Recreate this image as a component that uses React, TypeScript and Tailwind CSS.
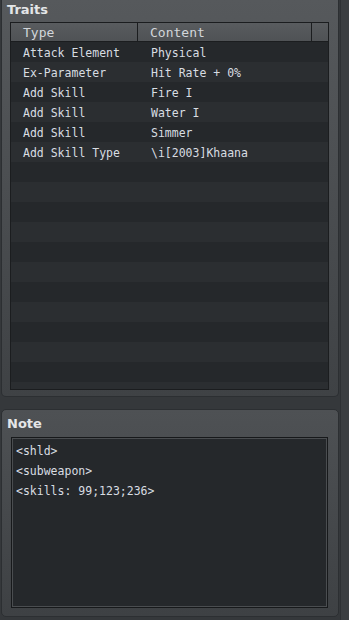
const traits = [
  { type: "Attack Element", content: "Physical" },
  { type: "Ex-Parameter", content: "Hit Rate + 0%" },
  { type: "Add Skill", content: "Fire I" },
  { type: "Add Skill", content: "Water I" },
  { type: "Add Skill", content: "Simmer" },
  { type: "Add Skill Type", content: "\\i[2003]Khaana" },
];

const noteLines = ["<shld>", "<subweapon>", "<skills: 99;123;236>"];

const mono = { fontFamily: '"DejaVu Sans Mono", "Liberation Mono", monospace' };
const sans = { fontFamily: '"DejaVu Sans", "Liberation Sans", sans-serif' };

// pad the list with empty rows so the table fills its box
const rows = [...traits, ...Array.from({ length: 12 }, () => ({ type: "", content: "" }))];

export default function App() {
  return (
    <div className="flex h-[620px] w-[349px] overflow-hidden bg-[#35383b]">
      <div className="flex w-[340px] flex-col">
        {/* Traits */}
        <div className="ml-[1px] flex h-[397px] w-[338px] flex-col rounded-b-[5px] border-x border-b border-[#2c2f32] bg-gradient-to-b from-[#56595c] to-[#3f4245]">
          <div
            className="h-[22px] pl-[5px] text-[13px] font-bold leading-[20px] text-[#e4e6e8]"
            style={sans}
          >
            Traits
          </div>
          <div className="ml-[8px] flex h-[368px] w-[319px] flex-col overflow-hidden border border-[#1b1d1f] bg-[#25282b]">
            <div
              className="flex h-[19px] shrink-0 border-b border-[#1b1d1f] bg-gradient-to-b from-[#595c5f] to-[#4f5255] text-[13px] leading-[20px] text-[#d2d6da]"
              style={mono}
            >
              <div className="w-[127px] border-r border-[#1b1d1f] pl-[12px]">Type</div>
              <div className="w-[174px] border-r border-[#1b1d1f] pl-[12px]">Content</div>
              <div className="flex-1" />
            </div>
            {rows.map((r, i) => (
              <div
                key={i}
                className={
                  "flex h-[20px] shrink-0 overflow-hidden text-[11.5px] leading-[22px] text-[#d8dde2] " +
                  (i % 2 === 0 ? "bg-[#25282b]" : "bg-[#2b2e31]")
                }
                style={mono}
              >
                <div className="w-[128px] whitespace-pre pl-[12px]">{r.type}</div>
                <div className="whitespace-pre pl-[12px]">{r.content}</div>
              </div>
            ))}
          </div>
        </div>

        {/* Note */}
        <div className="ml-[1px] mt-[12px] flex h-[208px] w-[338px] flex-col rounded-[5px] border border-[#2c2f32] bg-gradient-to-b from-[#4e5154] to-[#3e4144]">
          <div
            className="h-[27px] pl-[5px] pt-[4px] text-[13px] font-bold leading-[20px] text-[#e4e6e8]"
            style={sans}
          >
            Note
          </div>
          <div className="ml-[9px] h-[171px] w-[317px] border border-[#17191b] bg-[#25282b] pl-[4px] pt-[3px] shadow-[inset_1px_1px_0_#4a4d50,inset_-1px_-1px_0_#4a4d50]">
            {noteLines.map((line, i) => (
              <div
                key={i}
                className="h-[20px] whitespace-pre text-[11.5px] leading-[20px] text-[#d8dde2]"
                style={mono}
              >
                {line}
              </div>
            ))}
          </div>
        </div>
      </div>
      <div className="flex-1 border-l border-[#2e3134] bg-[#3b3e41]" />
    </div>
  );
}
